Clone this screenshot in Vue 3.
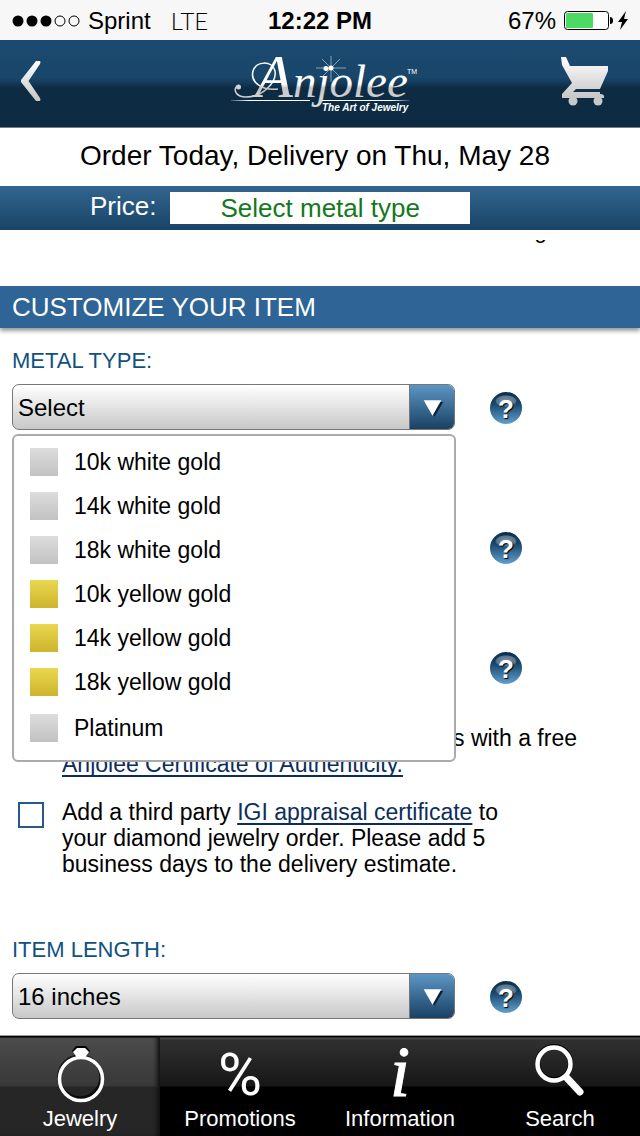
<script setup>
import { ref } from 'vue'

const metals = [
  { name: '10k white gold', tone: 'white' },
  { name: '14k white gold', tone: 'white' },
  { name: '18k white gold', tone: 'white' },
  { name: '10k yellow gold', tone: 'yellow' },
  { name: '14k yellow gold', tone: 'yellow' },
  { name: '18k yellow gold', tone: 'yellow' },
  { name: 'Platinum', tone: 'white' }
]
const metal = ref('')
const length = ref('16 inches')
const appraisal = ref(false)
</script>

<template>
  <div class="page">
    <div class="status">
      <div class="status-side">
        <svg class="signal" viewBox="0 0 68 12" aria-hidden="true">
          <circle cx="6" cy="6" r="5.5" />
          <circle cx="20" cy="6" r="5.5" />
          <circle cx="34" cy="6" r="5.5" />
          <circle class="hollow" cx="48" cy="6" r="5" />
          <circle class="hollow" cx="62" cy="6" r="5" />
        </svg>
        <span>Sprint</span>
        <span class="network">LTE</span>
      </div>
      <strong>12:22 PM</strong>
      <div class="status-side status-right">
        <span>67%</span>
        <svg class="battery" viewBox="0 0 66 20" aria-hidden="true">
          <rect x="0.5" y="0.5" width="44" height="18" rx="3" fill="#fff" stroke="#000" />
          <rect x="2" y="2" width="27" height="15" rx="1" fill="#4cd964" />
          <path d="M46 6q3 0 3 3.500t-3 3.500z" />
          <path d="M62 0L54 11h4l-2 8 8-11h-4z" />
        </svg>
      </div>
    </div>

    <header class="header">
      <button class="icon-button back" aria-label="Back">
        <svg width="22" height="42" viewBox="0 0 22 42">
          <defs>
            <linearGradient id="metalShine" x1="0" y1="0" x2="0" y2="1">
              <stop offset="0" stop-color="#fff" />
              <stop offset="1" stop-color="#c6c6c6" />
            </linearGradient>
          </defs>
          <path d="M16 1h4q1 1 0 3L8.500 21l11.500 17q1 2 0 3h-4L1 22v-2z" fill="url(#metalShine)" />
        </svg>
      </button>
      <svg class="logo" width="210" height="80" viewBox="0 0 210 80" role="img" aria-label="Anjolee, The Art of Jewelry">
        <defs>
          <linearGradient id="scriptShine" gradientUnits="userSpaceOnUse" x1="0" y1="8" x2="0" y2="72">
            <stop offset="0.5" stop-color="#fff" />
            <stop offset="0.560" stop-color="#c4c6c8" />
            <stop offset="1" stop-color="#e4e4e4" />
          </linearGradient>
          <linearGradient id="ruleFade" gradientUnits="userSpaceOnUse" x1="11" y1="0" x2="190" y2="0">
            <stop offset="0" stop-color="#fff" stop-opacity="0.200" />
            <stop offset="0.100" stop-color="#fff" />
            <stop offset="0.900" stop-color="#fff" />
            <stop offset="1" stop-color="#fff" stop-opacity="0.100" />
          </linearGradient>
        </defs>
        <path d="M58 45C42 47 30 38 33 27C36 17 52 16 55 27C57 39 42 53 26 53C16 53 13 46 17 42" fill="none" stroke="url(#scriptShine)" stroke-width="1.500" />
        <circle cx="18.500" cy="43" r="2.500" fill="#d0d2d4" />
        <text class="script" y="53" fill="url(#scriptShine)"><tspan class="initial" x="35">A</tspan><tspan x="73">njolee</tspan></text>
        <path d="M11 56.500H90M102 56.500H190" stroke="url(#ruleFade)" stroke-width="1" />
        <path d="M111 12V38M96 24H126M102 15L120 33M120 15L102 33" stroke="#dfeaf2" stroke-width="0.700" opacity="0.800" />
        <circle cx="111" cy="24" r="2.500" fill="#fff" />
        <text class="mark" x="187" y="30">TM</text>
        <text class="tagline" x="102" y="67">The Art of Jewelry</text>
      </svg>
      <button class="icon-button" aria-label="Shopping cart">
        <svg width="50" height="50" viewBox="0 0 50 50" fill="url(#metalShine)">
          <path d="M1 1h5l4 9h38v5l-8 18H16l-3 3h27v2q5 0 4 4H2v-4l10-11L2 9z" />
          <path d="M17 33h23l-1 3H14z" fill="#12334c" />
          <circle cx="13" cy="45" r="4.500" fill="#c8c8c8" />
          <circle cx="38" cy="45" r="4.500" fill="#c8c8c8" />
        </svg>
      </button>
    </header>

    <p class="delivery">Order Today, Delivery on Thu, May 28</p>
    <div class="price">
      <span>Price:</span>
      <output>Select metal type</output>
    </div>
    <div class="scrolled"><p>g</p></div>
    <h1>CUSTOMIZE YOUR ITEM</h1>

    <main>
      <label class="field-label" for="metal">METAL TYPE:</label>
      <div class="row">
        <div class="picker">
          <select id="metal" v-model="metal">
            <option value="">Select</option>
            <option v-for="m in metals" :key="m.name">{{ m.name }}</option>
          </select>
          <svg class="arrow" viewBox="0 0 45 44" aria-hidden="true">
            <path d="M16 17h18l-9 15z" fill="#0b2236" />
            <path d="M14 15h18l-9 16z" fill="#fff" />
          </svg>
          <ul class="menu" role="listbox" aria-label="Metal type">
            <li v-for="m in metals" :key="m.name" role="option" @click="metal = m.name">
              <i :class="['swatch', m.tone]"></i>{{ m.name }}
            </li>
          </ul>
        </div>
        <button class="help" aria-label="Help with metal type">?</button>
      </div>
      <div class="row second"><button class="help" aria-label="Help">?</button></div>
      <div class="row third"><button class="help" aria-label="Help">?</button></div>

      <div class="certificate">
        <p>comes with a free</p>
        <a href="#certificate">Anjolee Certificate of Authenticity.</a>
      </div>
      <div class="appraisal">
        <input id="appraisal" v-model="appraisal" type="checkbox" />
        <label for="appraisal">Add a third party <a href="#igi">IGI appraisal certificate</a> to your diamond jewelry order. Please add 5 business days to the delivery estimate.</label>
      </div>

      <label class="field-label" for="length">ITEM LENGTH:</label>
      <div class="row">
        <div class="picker">
          <select id="length" v-model="length">
            <option>16 inches</option>
          </select>
          <svg class="arrow" viewBox="0 0 45 44" aria-hidden="true">
            <path d="M16 17h18l-9 15z" fill="#0b2236" />
            <path d="M14 15h18l-9 16z" fill="#fff" />
          </svg>
        </div>
        <button class="help" aria-label="Help with item length">?</button>
      </div>
    </main>

    <nav class="tabs">
      <a class="active" href="#jewelry">
        <svg viewBox="0 0 60 64" aria-hidden="true">
          <circle cx="30" cy="35" r="21" fill="none" stroke="#000" stroke-width="3.500" opacity="0.700" />
          <path d="M26 4h10l4 5-6 7h-6l-6-7z" fill="#000" />
          <circle cx="31" cy="37" r="21.500" fill="none" stroke="#fff" stroke-width="3.500" />
          <path d="M27 6h8l4 4-5 7h-6l-5-7z" fill="#fff" />
        </svg>
        Jewelry
      </a>
      <a href="#promotions">
        <svg viewBox="0 0 60 64" aria-hidden="true"><text class="percent" x="30" y="53">%</text></svg>
        Promotions
      </a>
      <a href="#information">
        <svg viewBox="0 0 60 64" aria-hidden="true"><text class="info" x="30" y="54">i</text></svg>
        Information
      </a>
      <a href="#search">
        <svg viewBox="0 0 60 64" aria-hidden="true" fill="none" stroke-linecap="round">
          <circle cx="24" cy="21" r="16.500" stroke="#000" stroke-width="5" />
          <circle cx="24" cy="22" r="16.500" stroke="#fff" stroke-width="4.500" />
          <path d="M37 36L50 50" stroke="#fff" stroke-width="7" />
        </svg>
        Search
      </a>
    </nav>
  </div>
</template>

<style>
body {
  background: #fff;
}
</style>

<style scoped>
.page {
  display: flex;
  flex-direction: column;
  min-height: 100vh;
  font-family: "Liberation Sans", Arial, sans-serif;
  font-size: 23px;
  line-height: 26px;
  color: #000;
}
p, h1, ul {
  margin: 0;
  padding: 0;
}
button {
  border: 0;
  padding: 0;
  background: none;
  font: inherit;
}
.status {
  display: flex;
  align-items: center;
  box-sizing: border-box;
  height: 40px;
  padding: 1px 12px 0;
  background: #f7f7f7;
  font-size: 24px;
}
.status-side {
  display: flex;
  flex: 1;
  align-items: center;
  gap: 8px;
}
.status-right {
  justify-content: flex-end;
}
.signal {
  width: 68px;
  height: 12px;
}
.signal .hollow {
  fill: none;
  stroke: #000;
}
.network {
  margin-left: 12px;
  font-family: Lato, "Liberation Sans", sans-serif;
  font-weight: 300;
}
.battery {
  width: 66px;
  height: 20px;
  margin-right: -2px;
}
.header {
  display: flex;
  justify-content: space-between;
  box-sizing: border-box;
  height: 88px;
  padding: 0 30px 0 20px;
  border-bottom: 1px solid #777f86;
  background: linear-gradient(#1b4a70 0, #19466b 38px, #0d2c44 48px, #0c2a40 100%);
}
.icon-button {
  display: flex;
  align-items: center;
  width: 50px;
  padding-bottom: 6px;
}
.back {
  width: 70px;
}
.logo {
  margin-top: 4px;
}
.script {
  font-family: "Liberation Serif", serif;
  font-style: italic;
  font-size: 47px;
}
.initial {
  font-size: 62px;
}
.mark {
  font-size: 7px;
  fill: #fff;
}
.tagline {
  font-size: 10px;
  font-weight: bold;
  font-style: italic;
  fill: #fff;
}
.delivery {
  padding-right: 10px;
  font-size: 28px;
  line-height: 56px;
  padding-bottom: 2px;
  text-align: center;
}
.price {
  display: flex;
  align-items: center;
  gap: 14px;
  height: 44px;
  padding: 0 170px 0 90px;
  background: linear-gradient(#32658f, #194467);
  color: #fff;
  font-size: 26px;
}
.price span {
  padding-bottom: 4px;
}
.price output {
  flex: 1;
  background: #fff;
  color: #14781c;
  line-height: 32px;
  text-align: center;
}
.scrolled {
  height: 46px;
  padding-top: 10px;
}
.scrolled p {
  display: flex;
  align-items: flex-end;
  justify-content: flex-end;
  height: 3px;
  padding-right: 93px;
  overflow: hidden;
}
h1 {
  padding-left: 12px;
  background: #2e6496;
  box-shadow: 0 3px 4px #0006;
  color: #fff;
  font-size: 26px;
  font-weight: normal;
  line-height: 42px;
}
main {
  display: flex;
  flex-direction: column;
  padding-bottom: 15px;
}
.field-label {
  margin: 17px 12px 7px;
  color: #0f5280;
  font-size: 22px;
  line-height: 32px;
}
.row {
  display: flex;
  align-items: center;
  justify-content: flex-end;
  gap: 35px;
  height: 46px;
  padding: 0 118px 0 12px;
}
.row .help {
  margin-top: 2px;
}
.second {
  margin-top: 94px;
}
.third {
  margin-top: 74px;
}
.picker {
  position: relative;
  flex: 1;
  height: 46px;
}
.picker select {
  appearance: none;
  width: 100%;
  height: 46px;
  padding: 2px 50px 0 5px;
  border: 1px solid #777;
  border-radius: 7px;
  background: linear-gradient(#fff, #c8c8c8);
  color: #000;
  font: inherit;
  font-size: 24px;
}
.arrow {
  position: absolute;
  top: 1px;
  right: 1px;
  width: 44px;
  height: 44px;
  border-left: 1px solid #777;
  border-radius: 0 6px 6px 0;
  background: linear-gradient(#5c96c4, #194163);
  pointer-events: none;
}
.menu {
  position: absolute;
  z-index: 1;
  top: 50px;
  left: 0;
  right: -1px;
  padding: 4px 16px 8px;
  border: 2px solid #aaa;
  border-radius: 6px;
  background: #fff;
  list-style: none;
}
.menu li {
  display: flex;
  align-items: center;
  gap: 16px;
  height: 44px;
}
.menu li:last-child {
  height: 48px;
}
.swatch {
  width: 28px;
  height: 28px;
}
.swatch.white {
  background: linear-gradient(#dcdcdc, #c2c2c2);
}
.swatch.yellow {
  background: linear-gradient(#ead850, #cdb42c);
}
.help {
  width: 32px;
  height: 32px;
  border-radius: 50%;
  background:
    radial-gradient(ellipse 11px 6px at 50% 9px, #7e97aa 0, #56748d 85%, transparent 100%),
    linear-gradient(#092e4c, #174468 35%, #61a0d0);
  color: #fff;
  font-size: 26px;
  font-weight: bold;
  line-height: 34px;
  text-align: center;
  text-shadow: 1px 1px 1px #000;
}
.certificate {
  max-width: 515px;
  margin: 35px 0 0 62px;
}
.certificate p {
  text-align: right;
}
.certificate a,
.appraisal a {
  color: #0c2e5c;
  text-decoration: underline 2px;
  text-underline-offset: 3px;
  text-decoration-skip-ink: none;
}
.appraisal {
  display: flex;
  align-items: flex-start;
  gap: 18px;
  max-width: 488px;
  margin: 22px 0 40px 18px;
}
.appraisal input {
  flex: none;
  appearance: none;
  width: 26px;
  height: 26px;
  margin: 3px 0 0;
  border: 2px solid #26588a;
  background: #fff;
}
.tabs {
  display: flex;
  height: 100px;
  margin-top: auto;
  border-top: 1px solid #9a9a9a;
  background: linear-gradient(#000 0, #000 1px, #555 2px, #303030 4px, #171717 50px, #000 51px);
}
.tabs a {
  display: flex;
  flex: 1;
  flex-direction: column;
  align-items: center;
  padding-top: 6px;
  color: #fff;
  font-size: 22px;
  text-decoration: none;
}
.tabs .active {
  background: linear-gradient(#000 0, #000 1px, #4c4c4c 2px, #383838 50px, #262626 51px);
  box-shadow: inset -5px 0 4px -2px #111;
}
.tabs svg {
  width: 60px;
  height: 64px;
  overflow: visible;
}
.percent,
.info {
  fill: #fff;
  text-anchor: middle;
}
.percent {
  font-family: Roboto, sans-serif;
  font-size: 60px;
}
.info {
  font-family: "Liberation Serif", serif;
  font-size: 72px;
  font-style: italic;
  stroke: #fff;
  stroke-width: 1px;
}
</style>
